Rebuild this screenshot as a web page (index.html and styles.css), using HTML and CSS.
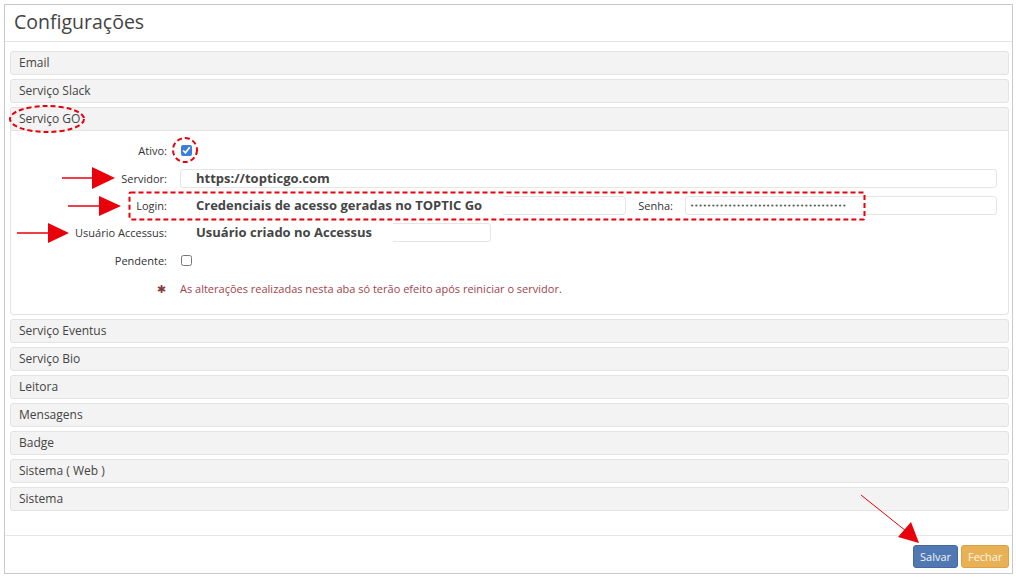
FILE: index.html
```html
<!DOCTYPE html>
<html lang="pt-BR">
<head>
    <meta charset="UTF-8">
    <title>Configurações</title>
    <link rel="stylesheet" href="styles.css">
</head>
<body>
    <div class="modal">
        <div class="modal-header">
            <h2>Configurações</h2>
        </div>

        <div class="modal-body">
            <div class="acc-item">Email</div>
            <div class="acc-item">Serviço Slack</div>
            <div class="acc-item open">Serviço GO</div>
            <div class="acc-panel">
                <div class="form-row">
                    <label>Ativo:</label>
                    <input type="checkbox" checked>
                </div>
                <div class="form-row">
                    <label>Servidor:</label>
                    <div class="field grow">
                        <input type="text" class="txt">
                        <span class="hint plain">https://topticgo.com</span>
                    </div>
                </div>
                <div class="form-row short">
                    <label>Login:</label>
                    <div class="field grow">
                        <input type="text" class="txt">
                        <span class="hint">Credenciais de acesso geradas no TOPTIC Go</span>
                    </div>
                    <label class="inline">Senha:</label>
                    <div class="field senha">
                        <input type="text" class="txt pwd" value="•••••••••••••••••••••••••••••••••••••">
                    </div>
                </div>
                <div class="form-row short">
                    <label>Usuário Accessus:</label>
                    <div class="field user">
                        <input type="text" class="txt">
                        <span class="hint">Usuário criado no Accessus</span>
                    </div>
                </div>
                <div class="form-row">
                    <label>Pendente:</label>
                    <input type="checkbox">
                </div>
                <div class="form-row note">
                    <label><span class="star">✱</span></label>
                    <span>As alterações realizadas nesta aba só terão efeito após reiniciar o servidor.</span>
                </div>
            </div>
            <div class="acc-item">Serviço Eventus</div>
            <div class="acc-item">Serviço Bio</div>
            <div class="acc-item">Leitora</div>
            <div class="acc-item">Mensagens</div>
            <div class="acc-item">Badge</div>
            <div class="acc-item">Sistema ( Web )</div>
            <div class="acc-item">Sistema</div>
        </div>

        <div class="modal-footer">
            <button class="btn btn-primary">Salvar</button>
            <button class="btn btn-warning">Fechar</button>
        </div>
    </div>

    <!-- marcações em vermelho por cima da tela -->
    <svg class="marks" width="1016" height="577" viewBox="0 0 1016 577">
        <g fill="none" stroke="#e8000b" stroke-width="2" stroke-dasharray="5 3">
            <ellipse cx="47" cy="119" rx="37" ry="13"/>
            <circle cx="185" cy="150" r="12"/>
            <rect x="129.5" y="192.5" width="735" height="27" rx="1"/>
        </g>
        <g stroke="#e8000b" stroke-width="1.5">
            <line x1="62" y1="178" x2="96" y2="178"/>
            <line x1="68" y1="206" x2="102" y2="206"/>
            <line x1="17" y1="233" x2="50" y2="233"/>
            <line x1="861" y1="495" x2="906" y2="531" stroke-width="1"/>
        </g>
        <g fill="#e8000b">
            <polygon points="92,167 115,178 92,189"/>
            <polygon points="99,196 121,206 99,216"/>
            <polygon points="48,223 69,233 48,243"/>
            <polygon points="919,543 898,537 911,522"/>
        </g>
    </svg>
</body>
</html>
```

FILE: styles.css
```css
/* Base */
body {
    margin: 0;
    background: #fff;
    font-family: 'Open Sans', 'DejaVu Sans', sans-serif;
    color: #333;
}

.modal {
    margin: 4px;
    width: 1009px;
    height: 570px;
    box-sizing: border-box;
    border: 1px solid #c9c9c9;
    display: flex;
    flex-direction: column;
}

/* Header */
.modal-header {
    height: 37px;
    box-sizing: border-box;
    border-bottom: 1px solid #e5e5e5;
    padding-left: 9px;
}

.modal-header h2 {
    margin: 0;
    font-size: 19.5px;
    font-weight: 400;
    color: #444;
    line-height: 34px;
}

/* Accordion */
.modal-body {
    flex: 1;
    padding: 9px 3px 0 5px;
}

.acc-item {
    height: 24px;
    box-sizing: border-box;
    margin-bottom: 4px;
    padding-left: 8px;
    background: #f3f3f3;
    border: 1px solid #e3e3e3;
    border-radius: 3px;
    font-size: 12px;
    line-height: 22px;
    color: #444;
}

.acc-item.open {
    margin-bottom: 0;
    border-radius: 3px 3px 0 0;
}

.acc-panel {
    height: 184px;
    box-sizing: border-box;
    margin-bottom: 4px;
    padding: 5px 11px 10px 0;
    border: 1px solid #e3e3e3;
    border-top: none;
    border-radius: 0 0 4px 4px;
}

/* Form */
.form-row {
    display: flex;
    align-items: center;
    height: 28px;
}

.form-row.short {
    height: 27px;
}

.form-row label {
    width: 156px;
    flex: none;
    text-align: right;
    padding-right: 13px;
    font-size: 11px;
    color: #333;
}

.form-row label.inline {
    width: auto;
    padding: 0 12px 0 12px;
}

input[type="checkbox"] {
    margin: 0 0 0 1px;
    width: 11px;
    height: 11px;
    accent-color: #3c7fd8;
}

.field {
    position: relative;
    height: 19px;
}

.field.grow {
    flex: 1;
}

.field.senha {
    width: 312px;
}

.field.user {
    width: 311px;
}

.txt {
    display: block;
    width: 100%;
    height: 19px;
    box-sizing: border-box;
    margin: 0;
    border: 1px solid #e6e6e6;
    border-radius: 3px;
    outline: none;
    padding: 0 4px;
    background: #fff;
}

.pwd {
    font-family: 'DejaVu Sans', sans-serif;
    font-size: 7px;
    letter-spacing: 0.1px;
    color: #555;
}

.hint {
    position: absolute;
    left: 0;
    top: -3px;
    padding: 3px 21px 3px 16px;
    background: #fff;
    font-size: 13px;
    line-height: 18px;
    font-weight: 700;
    color: #454545;
    white-space: nowrap;
}

.hint.plain {
    background: transparent;
}

.note {
    font-size: 11px;
    color: #a0444a;
}

.note .star {
    color: #8a3a3f;
    font-size: 11px;
    margin-right: 1px;
}

/* Footer */
.modal-footer {
    height: 38px;
    box-sizing: border-box;
    border-top: 1px solid #e5e5e5;
    display: flex;
    justify-content: flex-end;
    align-items: flex-start;
    gap: 3px;
    padding: 9px 3px 0 0;
}

.btn {
    height: 23px;
    border: 1px solid transparent;
    border-radius: 3px;
    font-family: 'Open Sans', sans-serif;
    font-size: 11px;
    padding: 0 6px;
    cursor: pointer;
}

.btn-primary {
    background: #5078b3;
    border-color: #45699f;
    color: #eef2f8;
    width: 45px;
}

.btn-warning {
    background: #e8b155;
    border-color: #dba244;
    color: #fdf5e8;
    width: 48px;
}

/* Annotations */
.marks {
    position: absolute;
    top: 0;
    left: 0;
    pointer-events: none;
}
```
